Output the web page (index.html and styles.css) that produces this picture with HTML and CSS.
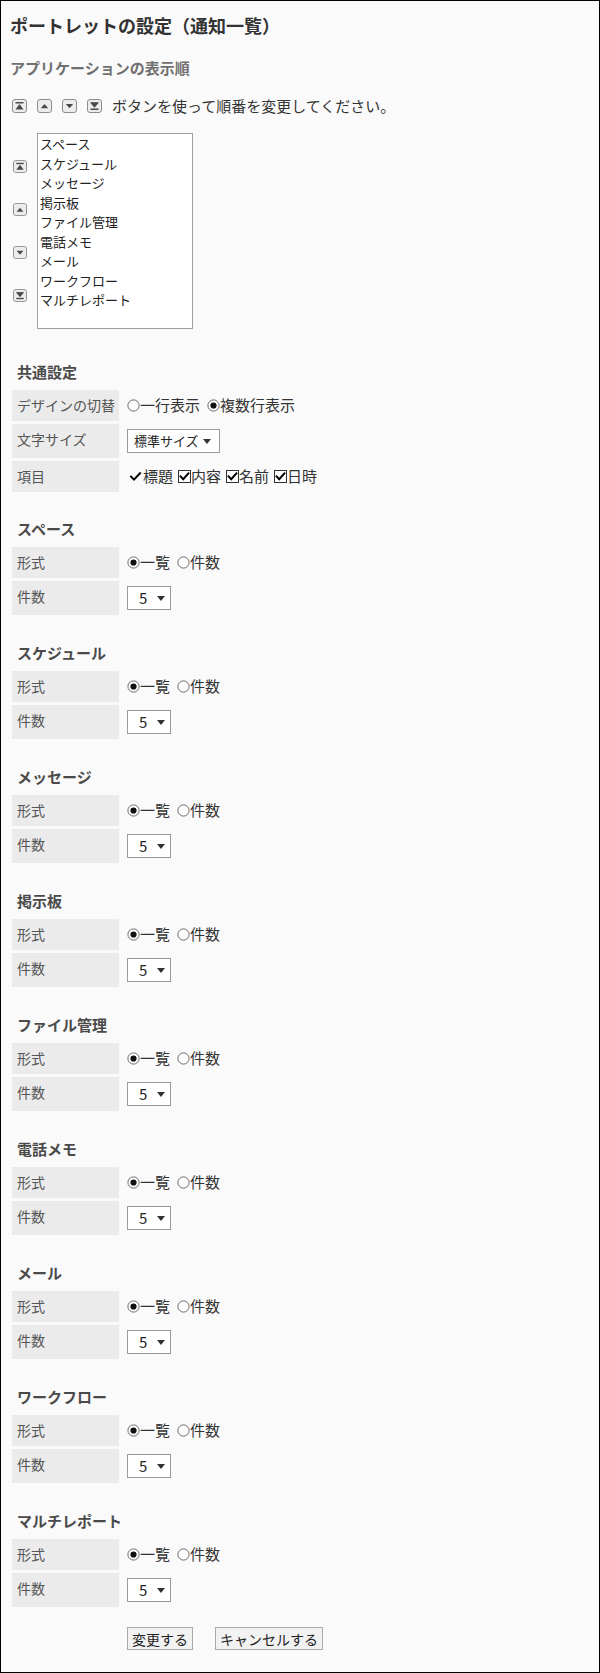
FILE: index.html
```html
<!DOCTYPE html>
<html lang="ja">
<head>
<meta charset="utf-8">
<title>ポートレットの設定（通知一覧）</title>
<link rel="stylesheet" href="styles.css">
</head>
<body>
<div class="page">
  <h1 class="title">ポートレットの設定（通知一覧）</h1>
  <h2 class="sub">アプリケーションの表示順</h2>

  <div class="order-help">
    <svg class="ic" viewBox="0 0 15 14"><rect x=".5" y=".5" width="14" height="13" rx="2.5" class="ic-bg"/><rect x="3.5" y="3" width="8" height="1.5" class="ic-fg"/><polygon points="3.5,10.5 7.5,5 11.5,10.5" class="ic-fg"/></svg>
    <svg class="ic" viewBox="0 0 15 14"><rect x=".5" y=".5" width="14" height="13" rx="2.5" class="ic-bg"/><polygon points="3.8,9.3 7.5,5 11.2,9.3" class="ic-fg"/></svg>
    <svg class="ic" viewBox="0 0 15 14"><rect x=".5" y=".5" width="14" height="13" rx="2.5" class="ic-bg"/><polygon points="3.8,5 11.2,5 7.5,9.3" class="ic-fg"/></svg>
    <svg class="ic" viewBox="0 0 15 14"><rect x=".5" y=".5" width="14" height="13" rx="2.5" class="ic-bg"/><rect x="3.5" y="3.2" width="8" height="0.9" class="ic-fg"/><polygon points="3.5,4.1 11.5,4.1 7.5,8.8" class="ic-fg"/><rect x="3.5" y="9.5" width="8" height="1.5" class="ic-fg"/></svg>
    <span class="help-text">ボタンを使って順番を変更してください。</span>
  </div>

  <div class="order-box">
    <div class="order-btns">
      <svg class="ic ic-sm" viewBox="0 0 15 14"><rect x=".5" y=".5" width="14" height="13" rx="2.5" class="ic-bg"/><rect x="3.5" y="3" width="8" height="1.5" class="ic-fg"/><polygon points="3.5,10.5 7.5,5 11.5,10.5" class="ic-fg"/></svg>
      <svg class="ic ic-sm" viewBox="0 0 15 14"><rect x=".5" y=".5" width="14" height="13" rx="2.5" class="ic-bg"/><polygon points="3.8,9.3 7.5,5 11.2,9.3" class="ic-fg"/></svg>
      <svg class="ic ic-sm" viewBox="0 0 15 14"><rect x=".5" y=".5" width="14" height="13" rx="2.5" class="ic-bg"/><polygon points="3.8,5 11.2,5 7.5,9.3" class="ic-fg"/></svg>
      <svg class="ic ic-sm" viewBox="0 0 15 14"><rect x=".5" y=".5" width="14" height="13" rx="2.5" class="ic-bg"/><rect x="3.5" y="3.2" width="8" height="0.9" class="ic-fg"/><polygon points="3.5,4.1 11.5,4.1 7.5,8.8" class="ic-fg"/><rect x="3.5" y="9.5" width="8" height="1.5" class="ic-fg"/></svg>
    </div>
    <ul class="app-list">
      <li>スペース</li>
      <li>スケジュール</li>
      <li>メッセージ</li>
      <li>掲示板</li>
      <li>ファイル管理</li>
      <li>電話メモ</li>
      <li>メール</li>
      <li>ワークフロー</li>
      <li>マルチレポート</li>
    </ul>
  </div>

  <section class="sec sec-common">
    <h3 class="sec-title">共通設定</h3>
    <div class="rows">
      <div class="row">
        <div class="label">デザインの切替</div>
        <div class="value">
          <span class="opt"><svg class="radio" viewBox="0 0 13 13"><circle cx="6.5" cy="6.5" r="5.6" class="r-ring"/></svg>一行表示</span>
          <span class="opt"><svg class="radio" viewBox="0 0 13 13"><circle cx="6.5" cy="6.5" r="5.6" class="r-ring"/><circle cx="6.5" cy="6.5" r="3.1" class="r-dot"/></svg>複数行表示</span>
        </div>
      </div>
      <div class="row">
        <div class="label">文字サイズ</div>
        <div class="value">
          <span class="select select-size">標準サイズ<i class="arrow"></i></span>
        </div>
      </div>
      <div class="row">
        <div class="label">項目</div>
        <div class="value">
          <span class="opt opt-chk"><svg class="check plain" viewBox="0 0 13 13"><path d="M2 6.6 L5 9.6 L11 3.2" class="chk"/></svg>標題</span>
          <span class="opt opt-chk"><svg class="check" viewBox="0 0 13 13"><rect x=".5" y=".5" width="12" height="12" class="box"/><path d="M2.6 6.4 L5.2 9.2 L10.4 3.4" class="chk"/></svg>内容</span>
          <span class="opt opt-chk"><svg class="check" viewBox="0 0 13 13"><rect x=".5" y=".5" width="12" height="12" class="box"/><path d="M2.6 6.4 L5.2 9.2 L10.4 3.4" class="chk"/></svg>名前</span>
          <span class="opt opt-chk"><svg class="check" viewBox="0 0 13 13"><rect x=".5" y=".5" width="12" height="12" class="box"/><path d="M2.6 6.4 L5.2 9.2 L10.4 3.4" class="chk"/></svg>日時</span>
        </div>
      </div>
    </div>
  </section>

  <section class="sec sec-first">
    <h3 class="sec-title">スペース</h3>
    <div class="rows">
      <div class="row"><div class="label">形式</div><div class="value"><span class="opt"><svg class="radio" viewBox="0 0 13 13"><circle cx="6.5" cy="6.5" r="5.6" class="r-ring"/><circle cx="6.5" cy="6.5" r="3.1" class="r-dot"/></svg>一覧</span><span class="opt"><svg class="radio" viewBox="0 0 13 13"><circle cx="6.5" cy="6.5" r="5.6" class="r-ring"/></svg>件数</span></div></div>
      <div class="row"><div class="label">件数</div><div class="value"><span class="select select-num">5<i class="arrow"></i></span></div></div>
    </div>
  </section>

  <section class="sec">
    <h3 class="sec-title">スケジュール</h3>
    <div class="rows">
      <div class="row"><div class="label">形式</div><div class="value"><span class="opt"><svg class="radio" viewBox="0 0 13 13"><circle cx="6.5" cy="6.5" r="5.6" class="r-ring"/><circle cx="6.5" cy="6.5" r="3.1" class="r-dot"/></svg>一覧</span><span class="opt"><svg class="radio" viewBox="0 0 13 13"><circle cx="6.5" cy="6.5" r="5.6" class="r-ring"/></svg>件数</span></div></div>
      <div class="row"><div class="label">件数</div><div class="value"><span class="select select-num">5<i class="arrow"></i></span></div></div>
    </div>
  </section>

  <section class="sec">
    <h3 class="sec-title">メッセージ</h3>
    <div class="rows">
      <div class="row"><div class="label">形式</div><div class="value"><span class="opt"><svg class="radio" viewBox="0 0 13 13"><circle cx="6.5" cy="6.5" r="5.6" class="r-ring"/><circle cx="6.5" cy="6.5" r="3.1" class="r-dot"/></svg>一覧</span><span class="opt"><svg class="radio" viewBox="0 0 13 13"><circle cx="6.5" cy="6.5" r="5.6" class="r-ring"/></svg>件数</span></div></div>
      <div class="row"><div class="label">件数</div><div class="value"><span class="select select-num">5<i class="arrow"></i></span></div></div>
    </div>
  </section>

  <section class="sec">
    <h3 class="sec-title">掲示板</h3>
    <div class="rows">
      <div class="row"><div class="label">形式</div><div class="value"><span class="opt"><svg class="radio" viewBox="0 0 13 13"><circle cx="6.5" cy="6.5" r="5.6" class="r-ring"/><circle cx="6.5" cy="6.5" r="3.1" class="r-dot"/></svg>一覧</span><span class="opt"><svg class="radio" viewBox="0 0 13 13"><circle cx="6.5" cy="6.5" r="5.6" class="r-ring"/></svg>件数</span></div></div>
      <div class="row"><div class="label">件数</div><div class="value"><span class="select select-num">5<i class="arrow"></i></span></div></div>
    </div>
  </section>

  <section class="sec">
    <h3 class="sec-title">ファイル管理</h3>
    <div class="rows">
      <div class="row"><div class="label">形式</div><div class="value"><span class="opt"><svg class="radio" viewBox="0 0 13 13"><circle cx="6.5" cy="6.5" r="5.6" class="r-ring"/><circle cx="6.5" cy="6.5" r="3.1" class="r-dot"/></svg>一覧</span><span class="opt"><svg class="radio" viewBox="0 0 13 13"><circle cx="6.5" cy="6.5" r="5.6" class="r-ring"/></svg>件数</span></div></div>
      <div class="row"><div class="label">件数</div><div class="value"><span class="select select-num">5<i class="arrow"></i></span></div></div>
    </div>
  </section>

  <section class="sec">
    <h3 class="sec-title">電話メモ</h3>
    <div class="rows">
      <div class="row"><div class="label">形式</div><div class="value"><span class="opt"><svg class="radio" viewBox="0 0 13 13"><circle cx="6.5" cy="6.5" r="5.6" class="r-ring"/><circle cx="6.5" cy="6.5" r="3.1" class="r-dot"/></svg>一覧</span><span class="opt"><svg class="radio" viewBox="0 0 13 13"><circle cx="6.5" cy="6.5" r="5.6" class="r-ring"/></svg>件数</span></div></div>
      <div class="row"><div class="label">件数</div><div class="value"><span class="select select-num">5<i class="arrow"></i></span></div></div>
    </div>
  </section>

  <section class="sec">
    <h3 class="sec-title">メール</h3>
    <div class="rows">
      <div class="row"><div class="label">形式</div><div class="value"><span class="opt"><svg class="radio" viewBox="0 0 13 13"><circle cx="6.5" cy="6.5" r="5.6" class="r-ring"/><circle cx="6.5" cy="6.5" r="3.1" class="r-dot"/></svg>一覧</span><span class="opt"><svg class="radio" viewBox="0 0 13 13"><circle cx="6.5" cy="6.5" r="5.6" class="r-ring"/></svg>件数</span></div></div>
      <div class="row"><div class="label">件数</div><div class="value"><span class="select select-num">5<i class="arrow"></i></span></div></div>
    </div>
  </section>

  <section class="sec">
    <h3 class="sec-title">ワークフロー</h3>
    <div class="rows">
      <div class="row"><div class="label">形式</div><div class="value"><span class="opt"><svg class="radio" viewBox="0 0 13 13"><circle cx="6.5" cy="6.5" r="5.6" class="r-ring"/><circle cx="6.5" cy="6.5" r="3.1" class="r-dot"/></svg>一覧</span><span class="opt"><svg class="radio" viewBox="0 0 13 13"><circle cx="6.5" cy="6.5" r="5.6" class="r-ring"/></svg>件数</span></div></div>
      <div class="row"><div class="label">件数</div><div class="value"><span class="select select-num">5<i class="arrow"></i></span></div></div>
    </div>
  </section>

  <section class="sec">
    <h3 class="sec-title">マルチレポート</h3>
    <div class="rows">
      <div class="row"><div class="label">形式</div><div class="value"><span class="opt"><svg class="radio" viewBox="0 0 13 13"><circle cx="6.5" cy="6.5" r="5.6" class="r-ring"/><circle cx="6.5" cy="6.5" r="3.1" class="r-dot"/></svg>一覧</span><span class="opt"><svg class="radio" viewBox="0 0 13 13"><circle cx="6.5" cy="6.5" r="5.6" class="r-ring"/></svg>件数</span></div></div>
      <div class="row"><div class="label">件数</div><div class="value"><span class="select select-num">5<i class="arrow"></i></span></div></div>
    </div>
  </section>

  <div class="actions">
    <button type="button" class="btn btn-ok">変更する</button>
    <button type="button" class="btn btn-cancel">キャンセルする</button>
  </div>
</div>
</body>
</html>
```

FILE: styles.css
```css
html, body {
  margin: 0;
  padding: 0;
  background: #fafafa;
}

.page {
  box-sizing: border-box;
  width: 600px;
  height: 1673px;
  border: 1px solid #000;
  background: #fafafa;
  padding: 12px 9px 0;
  font-family: "Noto Sans CJK JP", "Noto Sans", sans-serif;
  color: #333;
}

.title {
  margin: 0;
  font-size: 18px;
  line-height: 24px;
  font-weight: bold;
  color: #333;
}

.sub {
  margin: 21px 0 0;
  font-size: 15px;
  line-height: 20px;
  font-weight: bold;
  color: #707070;
}

.order-help {
  margin: 18px 0 0 2px;
  display: flex;
  align-items: center;
  gap: 10px;
  height: 20px;
}

.ic {
  width: 15px;
  height: 14px;
  flex: none;
  display: block;
}

.ic-sm {
  width: 14px;
  height: 13px;
}

.ic-bg {
  fill: #ececec;
  stroke: #8c8c8c;
  stroke-width: 1;
}

.ic-fg {
  fill: #4a4a4a;
}

.help-text {
  font-size: 15px;
  line-height: 20px;
  color: #333;
}

.order-box {
  margin-top: 17px;
  display: flex;
}

.order-btns {
  margin-left: 3px;
  width: 14px;
  padding-top: 27px;
  display: flex;
  flex-direction: column;
  gap: 30px;
}

.app-list {
  box-sizing: border-box;
  margin: 0 0 0 10px;
  padding: 0 0 0 2px;
  list-style: none;
  width: 156px;
  height: 196px;
  border: 1px solid #a0a0a0;
  background: #fff;
  font-size: 13px;
  line-height: 19.5px;
  color: #222;
}

.sec {
  margin-top: 28px;
}

.sec-common {
  margin-top: 33px;
}

.sec-first {
  margin-top: 27px;
}

.sec-title {
  margin: 0 0 8px;
  padding-left: 7px;
  font-size: 15px;
  line-height: 20px;
  font-weight: bold;
  color: #4a4a4a;
}

.rows {
  margin-left: 2px;
  display: flex;
  flex-direction: column;
  gap: 3px;
}

.row {
  display: flex;
}

.label {
  box-sizing: border-box;
  width: 107px;
  flex: none;
  background: #ebebeb;
  padding: 5px 0 6px 5px;
  font-size: 14px;
  line-height: 20px;
  color: #555;
  white-space: nowrap;
  overflow: hidden;
}

.value {
  padding: 5px 0 5px 8px;
  font-size: 15px;
  line-height: 20px;
  color: #333;
  display: flex;
  align-items: flex-start;
  white-space: nowrap;
}

.opt {
  display: inline-flex;
  align-items: center;
  margin-right: 7px;
}

.opt-chk {
  margin-right: 5px;
}

.radio {
  width: 13px;
  height: 13px;
  flex: none;
}

.r-ring {
  fill: #fff;
  stroke: #6a6a6a;
  stroke-width: 1;
}

.r-dot {
  fill: #111;
}

.check {
  width: 13px;
  height: 13px;
  flex: none;
}

.check.plain {
  margin-left: 2px;
  margin-right: 1px;
}

.box {
  fill: #fff;
  stroke: #333;
  stroke-width: 1;
}

.chk {
  fill: none;
  stroke: #000;
  stroke-width: 2;
  stroke-linecap: square;
}

.select {
  box-sizing: border-box;
  display: inline-flex;
  align-items: center;
  justify-content: space-between;
  height: 24px;
  border: 1px solid #9a9a9a;
  background: #fff;
  color: #222;
}

.select-size {
  width: 93px;
  padding: 0 8px 0 6px;
  font-size: 13px;
}

.select-num {
  width: 44px;
  padding: 0 5px 0 11px;
  font-size: 15px;
}

.arrow {
  display: block;
  width: 0;
  height: 0;
  border-left: 4.5px solid transparent;
  border-right: 4.5px solid transparent;
  border-top: 5px solid #333;
}

.actions {
  margin: 20px 0 0 117px;
  display: flex;
  gap: 22px;
}

.btn {
  box-sizing: border-box;
  height: 23px;
  padding: 0;
  border: 1px solid #aaa;
  background: #f2f2f2;
  font-family: "Noto Sans CJK JP", "Noto Sans", sans-serif;
  font-size: 14px;
  line-height: 20px;
  color: #222;
}

.btn-ok {
  width: 66px;
}

.btn-cancel {
  width: 108px;
}
```
